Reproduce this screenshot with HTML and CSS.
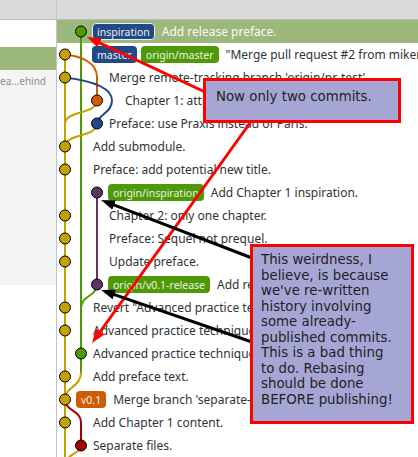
FILE: index.html
```html
<!DOCTYPE html>
<html>
<head>
<meta charset="utf-8">
<link rel="stylesheet" href="styles.css">
</head>
<body>
<div class="app">
  <aside class="side">
    <div class="bar"></div>
    <div class="side-gap"></div>
    <div class="side-sel"></div>
    <div class="side-list"><div class="side-item">ea...ehind</div></div>
  </aside>
  <main class="log">
    <div class="bar"></div>
    <div class="commits">
      <div class="row sel i1"><span class="ref ref-blue ref-cur">inspiration</span><span class="msg">Add release preface.</span></div>
      <div class="row i1"><span class="ref ref-blue">master</span><span class="ref ref-green">origin/master</span><span class="msg">"Merge pull request #2 from mikemcquaid/pr-test"</span></div>
      <div class="row i2"><span class="msg">Merge remote-tracking branch 'origin/pr-test'</span></div>
      <div class="row i3"><span class="msg">Chapter 1: attribute the quote.</span></div>
      <div class="row i2"><span class="msg">Preface: use Praxis instead of Paris.</span></div>
      <div class="row i1"><span class="msg">Add submodule.</span></div>
      <div class="row i1"><span class="msg">Preface: add potential new title.</span></div>
      <div class="row i2"><span class="ref ref-green">origin/inspiration</span><span class="msg">Add Chapter 1 inspiration.</span></div>
      <div class="row i2"><span class="msg">Chapter 2: only one chapter.</span></div>
      <div class="row i2"><span class="msg">Preface: Sequel not prequel.</span></div>
      <div class="row i2"><span class="msg">Update preface.</span></div>
      <div class="row i2"><span class="ref ref-green">origin/v0.1-release</span><span class="msg">Add release preface.</span></div>
      <div class="row i1"><span class="msg">Revert "Advanced practice technique."</span></div>
      <div class="row i1"><span class="msg">Advanced practice technique.</span></div>
      <div class="row i1"><span class="msg">Advanced practice technique.</span></div>
      <div class="row i1"><span class="msg">Add preface text.</span></div>
      <div class="row i0"><span class="ref ref-orange">v0.1</span><span class="msg">Merge branch 'separate-files'</span></div>
      <div class="row i1"><span class="msg">Add Chapter 1 content.</span></div>
      <div class="row i1"><span class="msg">Separate files.</span></div>
      <svg class="graph" width="361" height="437" viewBox="57 20 361 437">
        <g fill="none" stroke-width="2">
          <path d="M65,54.5 V470" stroke="#c4a000"/>
          <path d="M81,31.5 V374" stroke="#4e9a06"/>
          <path d="M81,372 C81,388 65,386 65,399.5" stroke="#c4a000"/>
          <path d="M65,54.5 C80,56 97,62 97,77.5 V100.5" stroke="#ce5c00"/>
          <path d="M65,77.5 C85,80 112,86 112,100.5 C112,113 98,114 97,123.5" stroke="#204a87"/>
          <path d="M97,100.5 C96,115 66,110 65,123.5" stroke="#c4a000"/>
          <path d="M97,123.5 C96,138 66,133 65,146.5" stroke="#c4a000"/>
          <path d="M97,192.5 V284.5" stroke="#5c3566"/>
          <path d="M97,284.5 C96,297 82,295 81,307.5" stroke="#4e9a06"/>
          <path d="M65,399.5 C66,412 81,410 81,422.5 V445.5" stroke="#a40000"/>
          <path d="M81,445.5 C80,455 67,452 65,466" stroke="#c4a000"/>
        </g>
        <g stroke="#000" stroke-width="1">
          <circle cx="81" cy="31.5" r="5.5" fill="#4e9a06"/>
          <circle cx="65" cy="54.5" r="5.5" fill="#c4a000"/>
          <circle cx="65" cy="77.5" r="5.5" fill="#c4a000"/>
          <circle cx="97" cy="100.5" r="5.5" fill="#ce5c00"/>
          <circle cx="97" cy="123.5" r="5.5" fill="#204a87"/>
          <circle cx="65" cy="146.5" r="5.5" fill="#c4a000"/>
          <circle cx="65" cy="169.5" r="5.5" fill="#c4a000"/>
          <circle cx="97" cy="192.5" r="5.5" fill="#5c3566"/>
          <circle cx="65" cy="215.5" r="5.5" fill="#c4a000"/>
          <circle cx="65" cy="238.5" r="5.5" fill="#c4a000"/>
          <circle cx="65" cy="261.5" r="5.5" fill="#c4a000"/>
          <circle cx="97" cy="284.5" r="5.5" fill="#5c3566"/>
          <circle cx="65" cy="307.5" r="5.5" fill="#c4a000"/>
          <circle cx="65" cy="330.5" r="5.5" fill="#c4a000"/>
          <circle cx="81" cy="353.5" r="5.5" fill="#4e9a06"/>
          <circle cx="65" cy="376.5" r="5.5" fill="#c4a000"/>
          <circle cx="65" cy="399.5" r="5.5" fill="#c4a000"/>
          <circle cx="65" cy="422.5" r="5.5" fill="#c4a000"/>
          <circle cx="81" cy="445.5" r="5.5" fill="#a40000"/>
        </g>
      </svg>
    </div>
  </main>
</div>
<svg class="arrows" width="418" height="457" viewBox="0 0 418 457">
  <defs>
    <marker id="hr" viewBox="0 0 14 10" refX="6" refY="5" markerWidth="14" markerHeight="10" markerUnits="userSpaceOnUse" orient="auto"><path d="M0,0 L14,5 L0,10 z" fill="#ff0000"/></marker>
    <marker id="hb" viewBox="0 0 14 10" refX="6" refY="5" markerWidth="14" markerHeight="10" markerUnits="userSpaceOnUse" orient="auto"><path d="M0,0 L14,5 L0,10 z" fill="#000"/></marker>
  </defs>
  <line x1="205" y1="92" x2="94.2" y2="40.4" stroke="#ff0000" stroke-width="3" marker-end="url(#hr)"/>
  <line x1="250" y1="123" x2="96.7" y2="336.5" stroke="#ff0000" stroke-width="3" marker-end="url(#hr)"/>
  <line x1="252" y1="258" x2="108.5" y2="202.9" stroke="#000" stroke-width="3" marker-end="url(#hb)"/>
  <line x1="252" y1="342" x2="108.6" y2="292.6" stroke="#000" stroke-width="3" marker-end="url(#hb)"/>
</svg>
<div class="note note-top">Now only two commits.</div>
<div class="note note-bottom">This weirdness, I<br>believe, is because<br>we've re-written<br>history involving<br>some already-<br>published commits.<br>This is a bad thing<br>to do. Rebasing<br>should be done<br>BEFORE publishing!</div>
</body>
</html>
```

FILE: styles.css
```css
html, body {
  margin: 0;
  padding: 0;
}
body {
  width: 418px;
  height: 457px;
  overflow: hidden;
  position: relative;
  background: #ffffff;
  font-family: "Noto Sans", "Open Sans", sans-serif;
}
.app {
  display: grid;
  grid-template-columns: 57px 1fr;
  height: 457px;
}
.side {
  border-right: 1px solid #c4c4c4;
  display: flex;
  flex-direction: column;
  overflow: hidden;
  background: #ffffff;
}
.bar {
  height: 19px;
  flex: none;
  background: #dadada;
  border-bottom: 1px solid #bababa;
}
.side-gap {
  height: 27px;
  flex: none;
}
.side-sel {
  height: 23px;
  flex: none;
  background: #9cb97b;
}
.side-list {
  height: 215px;
  flex: none;
  background: #f4f4f4;
}
.side-item {
  height: 23px;
  line-height: 23px;
  font-size: 10px;
  color: #8a8f96;
  white-space: nowrap;
}
.log {
  display: flex;
  flex-direction: column;
  min-width: 0;
  overflow: hidden;
}
.commits {
  position: relative;
  flex: 1;
}
.graph {
  position: absolute;
  left: 0;
  top: 0;
}
.row {
  height: 23px;
  display: flex;
  align-items: center;
  white-space: nowrap;
  overflow: hidden;
  font-size: 12px;
  color: #2e3436;
}
.sel {
  background: #9cb97b;
  color: #fafaf6;
}
.i0 { padding-left: 19px; }
.i1 { padding-left: 35px; }
.i2 { padding-left: 51px; }
.i3 { padding-left: 67px; }
.msg:first-child {
  margin-left: 1px;
}
.ref {
  display: inline-flex;
  align-items: center;
  flex: none;
  height: 17px;
  box-sizing: border-box;
  padding: 0 4px;
  border: 1px solid transparent;
  border-radius: 4px;
  font-size: 10.5px;
  color: #eeeeec;
  margin-right: 4px;
}
.ref + .msg {
  margin-left: 3px;
}
.ref-blue { background: #204a87; }
.ref-green { background: #4e9a06; }
.ref-orange { background: #ce5c00; }
.ref-cur { border-color: #e9eee2; }
.arrows {
  position: absolute;
  left: 0;
  top: 0;
}
.note {
  position: absolute;
  box-sizing: border-box;
  border: 3px solid #ff0000;
  background: #a6a6d4;
  color: #1e1e26;
  font-family: "DejaVu Sans", sans-serif;
  font-size: 13.33px;
  line-height: 15.5px;
  white-space: nowrap;
}
.note-top {
  left: 203px;
  top: 78px;
  width: 198px;
  height: 45px;
  padding: 8px 0 0 10px;
}
.note-bottom {
  left: 250px;
  top: 244px;
  width: 164px;
  height: 180px;
  padding: 5px 0 0 8px;
}
```
